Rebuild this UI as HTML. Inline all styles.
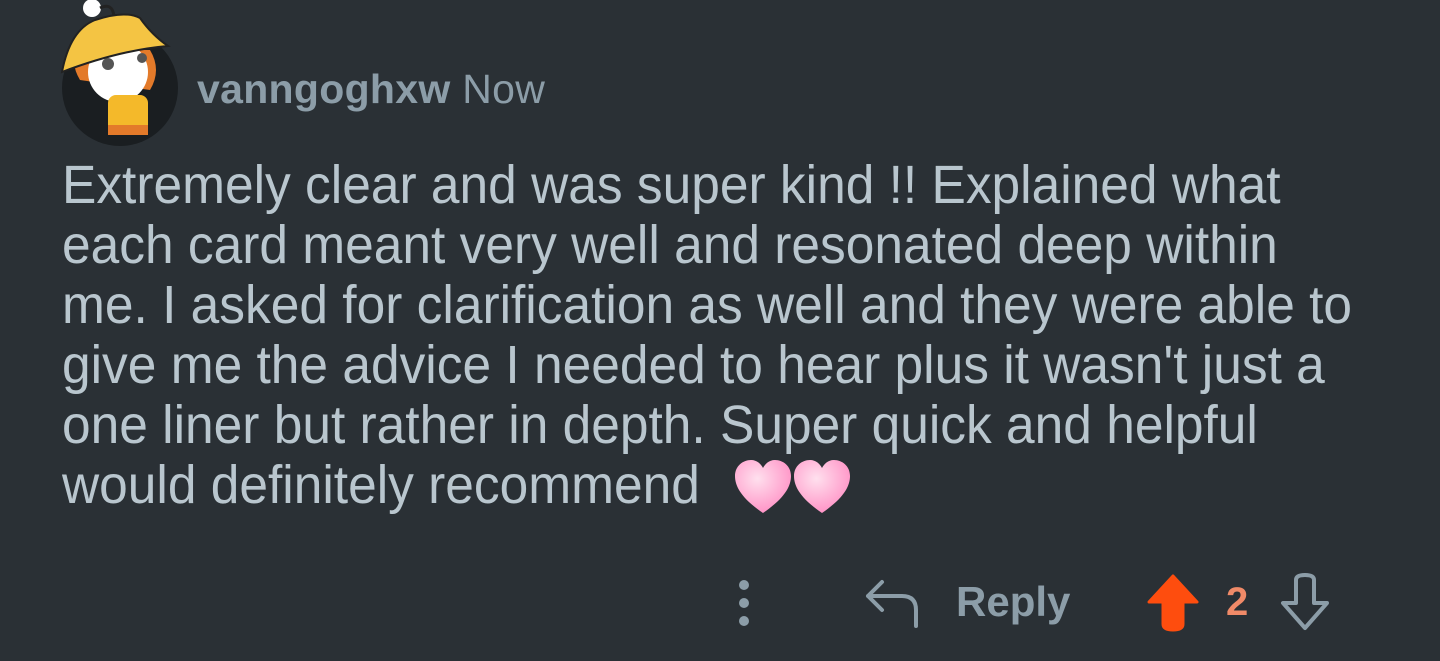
<!DOCTYPE html>
<html><head><meta charset="utf-8"><style>
html,body{margin:0;padding:0;background:#2a3035;width:1440px;height:661px;overflow:hidden;font-family:"Liberation Sans",sans-serif}
.hdr{position:absolute;left:197px;top:66px;font-size:41px;color:#8c9da8;white-space:nowrap;letter-spacing:0.3px}
.hdr b{font-weight:bold}
.body{position:absolute;left:62px;top:155px;font-size:54px;line-height:60px;color:#b9c6ce;white-space:nowrap;transform:scaleX(0.953);transform-origin:0 0}
.reply{position:absolute;left:956px;top:578px;font-size:42px;font-weight:bold;color:#8c9da8}
.num{position:absolute;left:1226px;top:580px;font-size:40px;font-weight:bold;color:#f08a68}
</style></head><body>
<svg style="position:absolute;left:40px;top:0" width="150" height="150" viewBox="0 0 150 150">
<circle cx="80" cy="88" r="58" fill="#1a1e21"/>
<circle cx="52" cy="8" r="9" fill="#fff"/>
<path d="M60 8 Q72 2 74 16" stroke="#222" stroke-width="3" fill="none"/>
<path d="M40 80 Q28 60 42 50 L110 50 Q122 70 110 90 Z" fill="#e37a2a"/>
<ellipse cx="78" cy="72" rx="30" ry="30" fill="#fff"/>
<circle cx="68" cy="64" r="6" fill="#555"/><circle cx="102" cy="58" r="5" fill="#555"/>
<rect x="68" y="95" width="40" height="38" rx="8" fill="#f4b92a"/>
<rect x="68" y="125" width="40" height="10" fill="#e37a2a"/>
<path d="M22 72 Q30 30 55 20 Q85 10 100 18 Q112 35 128 46 Q80 50 22 72Z" fill="#f4c443" stroke="#222" stroke-width="2"/>
</svg>
<div class="hdr"><b>vanngoghxw</b> Now</div>
<div class="body">Extremely clear and was super kind !! Explained what<br>each card meant very well and resonated deep within<br>me. I asked for clarification as well and they were able to<br>give me the advice I needed to hear plus it wasn't just a<br>one liner but rather in depth. Super quick and helpful<br>would definitely recommend</div>
<svg style="position:absolute;left:733px;top:458px" width="120" height="58" viewBox="0 0 120 58">
<defs><radialGradient id="g" cx="0.4" cy="0.35" r="0.7"><stop offset="0" stop-color="#ffe0ee"/><stop offset="1" stop-color="#ff8fc4"/></radialGradient></defs>
<path d="M30 55 C8 40 2 28 2 18 C2 8 10 2 18 2 C24 2 28 6 30 10 C32 6 36 2 42 2 C50 2 58 8 58 18 C58 28 52 40 30 55Z" fill="url(#g)"/>
<path d="M89 55 C67 40 61 28 61 18 C61 8 69 2 77 2 C83 2 87 6 89 10 C91 6 95 2 101 2 C109 2 117 8 117 18 C117 28 111 40 89 55Z" fill="url(#g)"/>
</svg>
<svg style="position:absolute;left:734px;top:578px" width="20" height="50"><circle cx="10" cy="7" r="5" fill="#8c9da8"/><circle cx="10" cy="25" r="5" fill="#8c9da8"/><circle cx="10" cy="43" r="5" fill="#8c9da8"/></svg>
<svg style="position:absolute;left:864px;top:578px" width="60" height="52" fill="none" stroke="#8c9da8" stroke-width="4" stroke-linecap="round" stroke-linejoin="round"><path d="M18 4 L4 18 L18 32 M4 18 H38 Q52 18 52 32 V48"/></svg>
<div class="reply">Reply</div>
<svg style="position:absolute;left:1143px;top:572px" width="60" height="60"><path d="M30 4 L54 30 L40 30 L40 52 Q40 58 30 58 Q20 58 20 52 L20 30 L6 30 Z" fill="#fe4d0e" stroke="#fe4d0e" stroke-width="3" stroke-linejoin="round"/></svg>
<div class="num">2</div>
<svg style="position:absolute;left:1275px;top:572px" width="60" height="62" fill="none" stroke="#8c9da8" stroke-width="4" stroke-linejoin="round"><path d="M21 8 Q21 3 30 3 Q39 3 39 8 L39 31 L52 31 L30 56 L8 31 L21 31 Z"/></svg>
</body></html>
